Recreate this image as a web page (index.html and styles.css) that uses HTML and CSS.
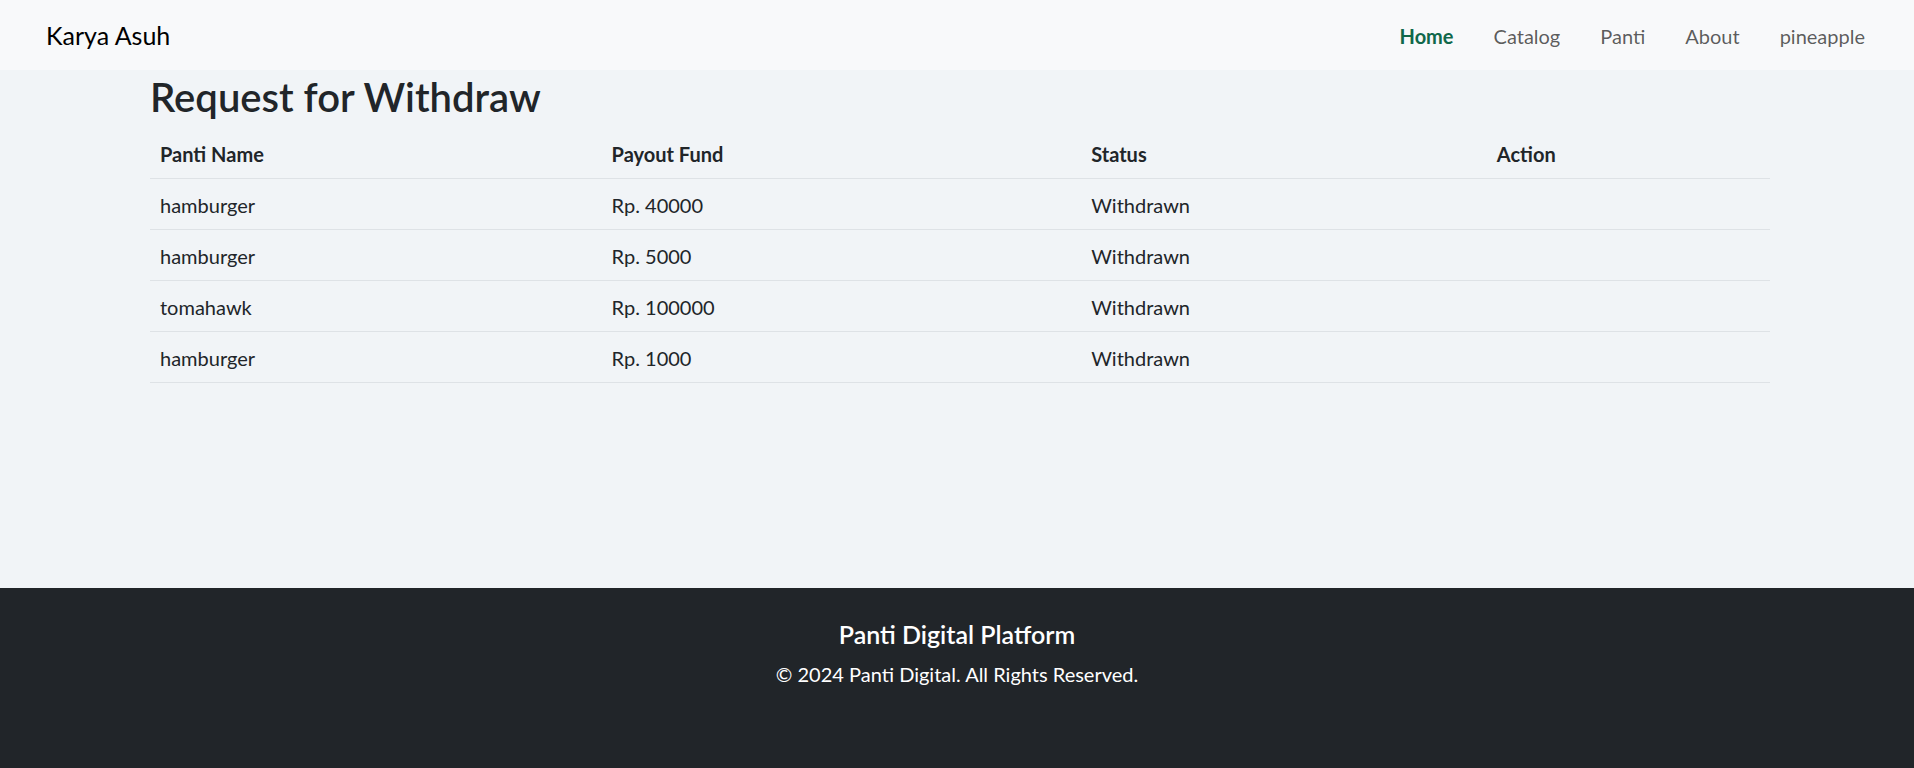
FILE: index.html
```html
<!DOCTYPE html>
<html lang="id">
<head>
<meta charset="utf-8">
<title>Request for Withdraw - Karya Asuh</title>
<link rel="stylesheet" href="styles.css">
</head>
<body>
<nav class="navbar">
  <a class="brand" href="#">Karya Asuh</a>
  <ul class="nav">
    <li><a class="nav-link active" href="#">Home</a></li>
    <li><a class="nav-link" href="#">Catalog</a></li>
    <li><a class="nav-link" href="#">Panti</a></li>
    <li><a class="nav-link" href="#">About</a></li>
    <li><a class="nav-link" href="#">pineapple</a></li>
  </ul>
</nav>

<main class="main">
  <div class="container">
    <h1 class="page-title">Request for Withdraw</h1>
    <table class="table">
      <colgroup>
        <col class="col-name">
        <col class="col-fund">
        <col class="col-status">
        <col class="col-action">
      </colgroup>
      <thead>
        <tr><th>Panti Name</th><th>Payout Fund</th><th>Status</th><th>Action</th></tr>
      </thead>
      <tbody>
        <tr><td>hamburger</td><td>Rp. 40000</td><td>Withdrawn</td><td></td></tr>
        <tr><td>hamburger</td><td>Rp. 5000</td><td>Withdrawn</td><td></td></tr>
        <tr><td>tomahawk</td><td>Rp. 100000</td><td>Withdrawn</td><td></td></tr>
        <tr><td>hamburger</td><td>Rp. 1000</td><td>Withdrawn</td><td></td></tr>
      </tbody>
    </table>
  </div>
</main>

<footer class="footer">
  <h5 class="footer-title">Panti Digital Platform</h5>
  <p class="footer-copy">&copy; 2024 Panti Digital. All Rights Reserved.</p>
</footer>
</body>
</html>
```
FILE: styles.css
```css
* { box-sizing: border-box; }

html, body {
  margin: 0;
  padding: 0;
}

body {
  font-family: "Lato", "Liberation Sans", sans-serif;
  font-size: 20px;
  line-height: 1.5;
  color: #212529;
  background: #f1f4f7;
}

a { text-decoration: none; }

/* Navbar */
.navbar {
  display: flex;
  align-items: center;
  justify-content: space-between;
  height: 70px;
  padding: 10px 29px 10px 46px;
  background: #f8f9fa;
}

.brand {
  font-size: 25px;
  line-height: 37.5px;
  padding: 7px 0 5px;
  color: #000;
}

.nav {
  display: flex;
  list-style: none;
  margin: 0;
  padding: 0;
}

.nav-link {
  display: block;
  padding: 11px 20px 9px;
  font-size: 20px;
  line-height: 30px;
  color: rgba(0, 0, 0, 0.65);
}

.nav-link.active {
  color: #10684a;
  font-weight: 700;
}

/* Main */
.main {
  min-height: 518px;
}

.container {
  max-width: 1650px;
  margin: 0 auto;
  padding: 0 12px 0 18px;
}

.page-title {
  margin: 0 0 7px;
  padding-top: 3px;
  font-size: 40px;
  line-height: 48px;
  font-weight: 600;
}

.table {
  width: 100%;
  border-collapse: collapse;
}

.col-name { width: 451.6px; }
.col-fund { width: 479.6px; }
.col-status { width: 405.6px; }
.col-action { width: 283.2px; }

.table th,
.table td {
  padding: 11px 10px 9px;
  line-height: 30px;
  text-align: left;
  vertical-align: top;
  border-bottom: 1px solid #dee2e6;
}

.table th {
  font-weight: 700;
}

/* Footer */
.footer {
  min-height: 181px;
  padding: 31px 0 30px;
  background: #212529;
  color: #fff;
  text-align: center;
}

.footer-title {
  margin: 0 0 10px;
  font-size: 25px;
  line-height: 30px;
  font-weight: 600;
}

.footer-copy {
  margin: 0;
  font-size: 20px;
  line-height: 30px;
}
```
